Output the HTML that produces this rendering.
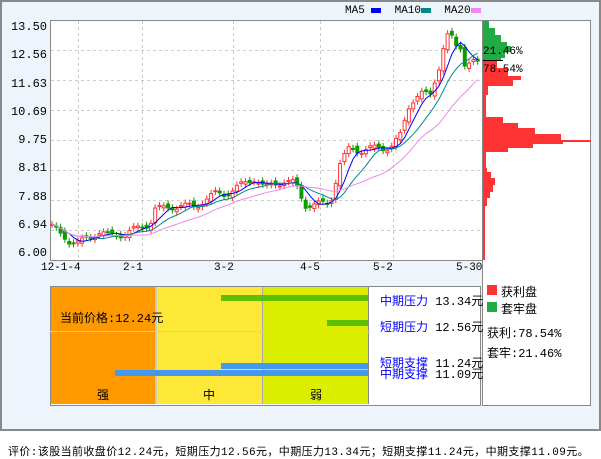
<!DOCTYPE html><html><head><meta charset="utf-8"><style>
body{margin:0;width:601px;height:456px;background:#fff;font-family:"Liberation Mono","Noto Sans CJK SC",monospace;position:relative;overflow:hidden}
.a{position:absolute}
.t{font-size:12px;color:#000;white-space:nowrap}
</style></head><body>
<div class="a" style="left:0;top:0;width:597px;height:427px;border:2px solid #888;background:#eef4fc"></div>
<svg class="a" style="left:0;top:0" width="601" height="430" id="s">
<rect x="50.5" y="20.5" width="432" height="240" fill="#fff" stroke="#888"/>
<rect x="482.5" y="20.5" width="108" height="385" fill="#fff" stroke="#888"/>
<g id="g" stroke="#ccc" stroke-dasharray="3,3"></g>
<g id="c"></g>
</svg>
<div class="a t" style="left:345px;top:5px;font-size:11px">MA5 <span style="display:inline-block;width:10px;height:5px;background:#00f;vertical-align:middle"></span>&nbsp; MA10<span style="display:inline-block;width:10px;height:5px;background:#088;vertical-align:middle"></span>&nbsp; MA20<span style="display:inline-block;width:10px;height:5px;background:#e8e;vertical-align:middle"></span></div>
<div class="a t" style="left:10px;top:13px;font-size:12px;line-height:28.25px;text-align:right;width:37px">13.50<br>12.56<br>11.63<br>10.69<br>9.75<br>8.81<br>7.88<br>6.94<br>6.00</div>
<div class="a t" style="left:41px;top:262px;font-size:11px">12-1-4</div>
<div class="a t" style="left:123px;top:262px;font-size:11px">2-1</div>
<div class="a t" style="left:214px;top:262px;font-size:11px">3-2</div>
<div class="a t" style="left:300px;top:262px;font-size:11px">4-5</div>
<div class="a t" style="left:373px;top:262px;font-size:11px">5-2</div>
<div class="a t" style="left:456px;top:262px;font-size:11px">5-30</div>
<div class="a t" style="left:483px;top:46px;font-size:11px">21.46%</div>
<div class="a" style="left:483px;top:60px;width:20px;height:1px;background:#000"></div>
<div class="a t" style="left:483px;top:64px;font-size:11px">78.54%</div>
<div class="a" style="left:50px;top:286px;width:429px;height:118px;border:1px solid #888;background:#fff"></div>
<div class="a" style="left:51px;top:287px;width:104px;height:117px;background:#f90"></div>
<div class="a" style="left:157px;top:287px;width:105px;height:117px;background:#fde838"></div>
<div class="a" style="left:263px;top:287px;width:105px;height:117px;background:#dbee00"></div>
<div class="a" style="left:155px;top:287px;width:2px;height:117px;background:#ccc"></div>
<div class="a" style="left:262px;top:287px;width:1px;height:117px;background:#aaa"></div>
<div class="a" style="left:368px;top:287px;width:1px;height:117px;background:#888"></div>
<div class="a" style="left:50px;top:331px;width:320px;height:1px;background:#fc4"></div>
<div class="a" style="left:221px;top:295px;width:147px;height:6px;background:#5dbf00"></div>
<div class="a" style="left:327px;top:320px;width:41px;height:6px;background:#5dbf00"></div>
<div class="a" style="left:221px;top:363px;width:147px;height:6px;background:#4499ee"></div>
<div class="a" style="left:115px;top:370px;width:253px;height:6px;background:#4499ee"></div>
<div class="a t" style="left:60px;top:309px">当前价格:12.24元</div>
<div class="a t" style="left:97px;top:386px">强</div>
<div class="a t" style="left:203px;top:386px">中</div>
<div class="a t" style="left:310px;top:386px">弱</div>
<div class="a t" style="left:380px;top:292px"><span style="color:#00f">中期压力</span> 13.34元</div>
<div class="a t" style="left:380px;top:318px"><span style="color:#00f">短期压力</span> 12.56元</div>
<div class="a t" style="left:380px;top:359px;line-height:11px"><span style="color:#00f">短期支撑</span> 11.24元<br><span style="color:#00f">中期支撑</span> 11.09元</div>
<div class="a" style="left:487px;top:285px;width:10px;height:10px;background:#f33"></div>
<div class="a t" style="left:501px;top:283px">获利盘</div>
<div class="a" style="left:487px;top:302px;width:10px;height:10px;background:#2a4"></div>
<div class="a t" style="left:501px;top:300px">套牢盘</div>
<div class="a t" style="left:487px;top:324px">获利:78.54%</div>
<div class="a t" style="left:487px;top:344px">套牢:21.46%</div>
<div class="a t" style="left:8px;top:443px;font-size:11px;letter-spacing:0.4px">评价:该股当前收盘价12.24元，短期压力12.56元，中期压力13.34元；短期支撑11.24元，中期支撑11.09元。</div>
<script>
var N='http://www.w3.org/2000/svg',g=document.getElementById('g'),c=document.getElementById('c');
function el(p,t,a){var e=document.createElementNS(N,t);for(var k in a)e.setAttribute(k,a[k]);p.appendChild(e);return e;}
function Y(p){return 27+(13.5-p)*30.13;}
for(var i=0;i<7;i++){var y=50+i*30+.5;el(g,'line',{x1:51,x2:482,y1:y,y2:y});}
[78,142,233,320,393].forEach(function(x){el(g,'line',{x1:x+.5,x2:x+.5,y1:21,y2:260});});
var k=[[52,6.9],[60,6.6],[70,6.4],[80,6.35],[90,6.5],[100,6.75],[110,6.55],[120,6.6],[130,6.75],[140,6.8],[150,7.0],[155,7.5],[165,7.45],[180,7.6],[195,7.5],[205,7.8],[215,7.95],[225,7.95],[235,8.15],[245,8.3],[255,8.5],[265,8.15],[275,8.3],[285,8.4],[295,8.3],[305,7.6],[315,7.6],[330,7.65],[340,8.95],[350,9.5],[360,9.4],[370,9.45],[380,9.5],[390,9.5],[400,9.85],[410,11.0],[420,11.3],[430,11.2],[440,12.3],[445,13.1],[450,13.3],[455,12.8],[460,12.9],[465,12.3],[472,12.4],[478,12.24]];
function f(x){for(var i=1;i<k.length;i++)if(x<=k[i][0]){var a=k[i-1],b=k[i];return a[1]+(b[1]-a[1])*(x-a[0])/(b[0]-a[0]);}return 12.24;}
var cl=[];
for(var x=52;x<=478;x+=4.3){var p=f(x)+Math.sin(x*1.7)*0.12;cl.push([x,p]);}
cl.forEach(function(d,i){var o=i?cl[i-1][1]+Math.cos(i*2.3)*0.08:d[1];var up=d[1]>=o;var col=up?'#f33':'#190';var h=Math.max(d[1],o)+0.12,l=Math.min(d[1],o)-0.12;
el(c,'line',{x1:d[0],x2:d[0],y1:Y(h),y2:Y(l),stroke:col});
el(c,'rect',{x:d[0]-1.5,y:Y(Math.max(d[1],o)),width:3,height:Math.max(1,Math.abs(Y(d[1])-Y(o))),fill:up?'#fff':col,stroke:col});});
[[5,'#00f'],[10,'#088'],[20,'#e8e']].forEach(function(m){var pts=[];cl.forEach(function(d,i){var a=Math.max(0,i-m[0]+1),s=0;for(var j=a;j<=i;j++)s+=cl[j][1];pts.push(d[0]+','+Y(s/(i-a+1)));});el(c,'polyline',{points:pts.join(' '),fill:'none',stroke:m[1]});});
var pr=[[21,6,'#2a4'],[28,12,'#2a4'],[35,18,'#2a4'],[42,24,'#2a4'],[46,28,'#2a4'],[52,22,'#2a4'],[58,18,'#2a4'],[61,14,'#f33'],[68,25,'#f33'],[76,38,'#f33'],[80,30,'#f33'],[86,5,'#f33'],[95,3,'#f33'],[117,20,'#f33'],[123,35,'#f33'],[128,52,'#f33'],[134,78,'#f33'],[140,108,'#f33'],[142,80,'#f33'],[144,50,'#f33'],[148,25,'#f33'],[152,3,'#f33'],[168,4,'#f33'],[172,8,'#f33'],[178,12,'#f33'],[185,10,'#f33'],[192,7,'#f33'],[198,4,'#f33'],[206,2,'#f33']];
pr.forEach(function(b,i){var nx=i+1<pr.length?pr[i+1][0]:212;el(c,'rect',{x:483,y:b[0],width:b[1],height:nx-b[0],fill:b[2]});});
el(c,'rect',{x:483,y:212,width:2,height:48,fill:'#f33'});
</script>
</body></html>
